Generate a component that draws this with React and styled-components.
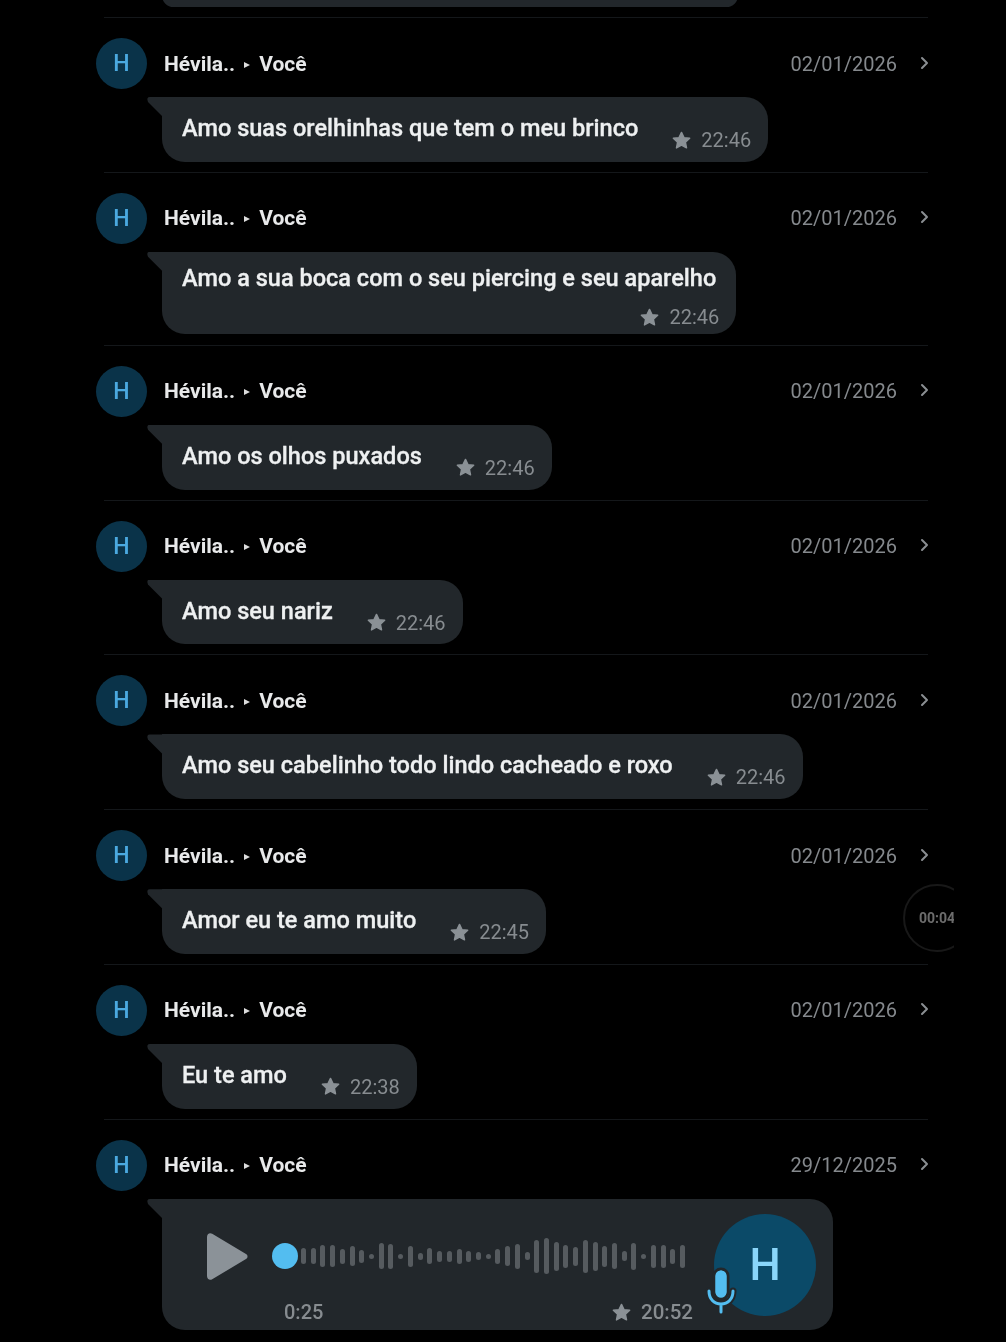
import React from 'react'
import styled, { createGlobalStyle } from 'styled-components'

const GlobalStyle = createGlobalStyle`
  html, body {
    margin: 0;
    height: 1342px;
    overflow: hidden;
    background: #000;
    font-family: Roboto, "Noto Sans", sans-serif;
  }
`

// the reference is a soft, upscaled video frame
const Page = styled.div`
  position: relative;
  width: 1006px;
  height: 1342px;
  padding-left: 96px;
  box-sizing: border-box;
  background: #000;
  overflow: hidden;
  filter: blur(0.45px);
`

const Divider = styled.div`
  width: 824px;
  height: 1px;
  margin-left: 8px;
  background: #14171a;
`

const Row = styled.div`
  width: 834px;
  padding: 20px 0 10px;
`

const Header = styled.div`
  display: flex;
  align-items: center;
  height: 51px;
  margin-bottom: 8px;
`

const Avatar = styled.div`
  display: flex;
  align-items: center;
  justify-content: center;
  width: 51px;
  height: 51px;
  flex-shrink: 0;
  margin-right: 17px;
  border-radius: 50%;
  background: #0a3349;
  color: #4ba9df;
  font-size: 23px;
  font-weight: 500;
`

const Name = styled.span`
  color: #e8e9ea;
  font-size: 21px;
  font-weight: 700;
`

const Caret = styled.span`
  width: 0;
  height: 0;
  margin: 2px 9px 0 9px;
  border-left: 6px solid #dcdcdc;
  border-top: 3px solid transparent;
  border-bottom: 3px solid transparent;
`

const DateText = styled.span`
  margin-left: auto;
  color: #85898d;
  font-size: 20px;
`

const Chevron = styled.svg`
  width: 10px;
  height: 14px;
  margin: -2px 0 0 23px;
  fill: none;
  stroke: #8a8e92;
  stroke-width: 2;
  stroke-linecap: round;
  stroke-linejoin: round;
`

const Bubble = styled.div`
  position: relative;
  display: flex;
  flex-direction: ${p => (p.$wrapped ? 'column' : 'row')};
  box-sizing: border-box;
  width: fit-content;
  height: ${p => (p.$wrapped ? '82.5px' : '64.8px')};
  margin: 0 0 ${p => (p.$wrapped ? '0.5px' : '0')} 66px;
  padding: ${p => (p.$wrapped ? '12.5px 20px 0' : '17px 17px 0 20px')};
  border-radius: 0 23px 23px 23px;
  background: #22272b;

  &::before {
    content: '';
    position: absolute;
    left: -15px;
    top: 0;
    width: 16px;
    height: 20px;
    background: #22272b;
    clip-path: path('M3 0 H16 V20 L1 5 Q-1 0 3 0 Z');
  }
`

const Peek = styled.div`
  width: 576px;
  height: 23px;
  margin: -16px 0 10px 66px;
  border-radius: 23px;
  background: #22272b;
`

const MessageText = styled.span`
  color: #eef0f1;
  font-size: 23.55px;
  font-weight: 500;
  line-height: 28px;
  white-space: nowrap;
  -webkit-text-stroke: 0.3px #eef0f1;
`

const Meta = styled.div`
  display: flex;
  align-items: center;
  gap: 10px;
  height: 26px;
  color: #878c90;
  font-size: ${p => (p.$strong ? '20.5px' : '20px')};
  font-weight: ${p => (p.$strong ? 500 : 400)};
`

const BubbleMeta = styled(Meta)`
  margin: ${p => (p.$wrapped ? '12px -3px 0 auto' : '13px 0 0 34px')};
`

const Star = styled.svg`
  width: 19px;
  height: 19px;
  fill: #8b9196;
  stroke: #8b9196;
  stroke-width: 1.5;
  stroke-linejoin: round;
`

const AudioBubble = styled.div`
  position: relative;
  display: grid;
  grid-template-columns: 41px 445px 123px;
  grid-template-rows: 84px 28px;
  box-sizing: border-box;
  width: 671px;
  height: 131px;
  margin: 8.3px 0 0 66px;
  padding: 15px 17px 4px 45px;
  border-radius: 0 23px 23px 23px;
  background: #22272b;

  &::before {
    content: '';
    position: absolute;
    left: -15px;
    top: 0;
    width: 16px;
    height: 20px;
    background: #22272b;
    clip-path: path('M3 0 H16 V20 L1 5 Q-1 0 3 0 Z');
  }
`

const PlayIcon = styled.svg`
  align-self: center;
  width: 41px;
  height: 47px;
  fill: #8b9298;
`

const Track = styled.div`
  display: flex;
  align-items: center;
  margin-left: 24px;
`

const Dot = styled.div`
  flex-shrink: 0;
  width: 26px;
  height: 26px;
  margin-right: 3px;
  border-radius: 50%;
  background: #53bdf0;
`

const Bars = styled.div`
  display: flex;
  align-items: center;
  gap: 4.72px;
`

const Bar = styled.div`
  width: 5px;
  height: ${p => p.$h}px;
  border-radius: 3px;
  background: #565b5f;
`

const TrackFooter = styled.div`
  display: flex;
  align-items: center;
  justify-content: space-between;
  grid-column: 2;
  grid-row: 2;
  margin-left: 24px;
  padding-left: 12px;
  color: #878c90;
  font-size: 20px;
  font-weight: 500;
`

const BigAvatar = styled.div`
  position: relative;
  display: flex;
  align-items: center;
  justify-content: center;
  grid-column: 3;
  grid-row: 1 / span 2;
  width: 102px;
  height: 102px;
  margin-left: 21px;
  border-radius: 50%;
  background: #0b4a68;
  color: #8ad6fa;
  font-size: 44px;
  font-weight: 500;
`

const MicBadge = styled.svg`
  position: absolute;
  left: -12px;
  top: 52px;
  width: 38px;
  height: 48px;
`

const TimerClip = styled.div`
  position: absolute;
  left: 900px;
  top: 880px;
  display: flex;
  align-items: center;
  justify-content: center;
  width: 54px;
  height: 75px;
  overflow: hidden;
`

const TimerRing = styled.svg`
  position: absolute;
  left: 3px;
  top: 4px;
  width: 68px;
  height: 68px;
  fill: none;
  stroke: #181818;
  stroke-width: 2;
`

const TimerText = styled.span`
  position: absolute;
  left: 19px;
  color: #6c6c6c;
  font-size: 14px;
  font-weight: 700;
  white-space: nowrap;
`

const messages = [
  { text: 'Amo suas orelhinhas que tem o meu brinco', time: '22:46' },
  { text: 'Amo a sua boca com o seu piercing e seu aparelho', time: '22:46', wrapped: true },
  { text: 'Amo os olhos puxados', time: '22:46' },
  { text: 'Amo seu nariz', time: '22:46' },
  { text: 'Amo seu cabelinho todo lindo cacheado e roxo', time: '22:46' },
  { text: 'Amor eu te amo muito', time: '22:45' },
  { text: 'Eu te amo', time: '22:38' },
]

const bars = [
  16, 16, 22, 22, 15, 20, 13, 5, 26, 25, 5, 21, 7, 16, 11, 11, 15, 11, 8, 5,
  15, 20, 25, 8, 33, 36, 29, 23, 19, 33, 29, 21, 26, 10, 27, 5, 23, 23, 15, 23,
]

const StarIcon = () => (
  <Star viewBox="2 2 20 20">
    <path d="M12 3.500l2.600 5.500 6 .7-4.500 4.100 1.200 6L12 16.800l-5.300 3 1.200-6-4.500-4.100 6-.7z" />
  </Star>
)

const ThreadHeader = ({ date }) => (
  <Header>
    <Avatar>H</Avatar>
    <Name>Hévila..</Name>
    <Caret />
    <Name>Você</Name>
    <DateText>{date}</DateText>
    <Chevron viewBox="0 0 10 14">
      <path d="M2 2l5 5-5 5" />
    </Chevron>
  </Header>
)

const App = () => (
  <>
    <GlobalStyle />
    <Page>
      <Peek />
      {messages.map((m, i) => (
        <React.Fragment key={i}>
          <Divider />
          <Row>
            <ThreadHeader date="02/01/2026" />
            <Bubble $wrapped={m.wrapped}>
              <MessageText>{m.text}</MessageText>
              <BubbleMeta $wrapped={m.wrapped}>
                <StarIcon />
                {m.time}
              </BubbleMeta>
            </Bubble>
          </Row>
        </React.Fragment>
      ))}
      <Divider />
      <Row>
        <ThreadHeader date="29/12/2025" />
        <AudioBubble>
          <PlayIcon viewBox="0 0 41 47">
            <path d="M0 4C0 .8 2.600-.8 5.200.7L39 21c2 1.200 2 3.800 0 5L5.200 46.300C2.600 47.800 0 46.200 0 43z" />
          </PlayIcon>
          <Track>
            <Dot />
            <Bars>
              {bars.map((h, i) => (
                <Bar key={i} $h={h} />
              ))}
            </Bars>
          </Track>
          <TrackFooter>
            <span>0:25</span>
            <Meta $strong>
              <StarIcon />
              20:52
            </Meta>
          </TrackFooter>
          <BigAvatar>
            H
            <MicBadge viewBox="0 0 38 48">
              <path d="M19 3a7 7 0 0 1 7 7v16a7 7 0 0 1-14 0V10a7 7 0 0 1 7-7z" fill="#53bdf0" stroke="#22272b" strokeWidth="3" />
              <path d="M7 25c0 8 5 13 12 13s12-5 12-13" fill="none" stroke="#22272b" strokeWidth="7" strokeLinecap="round" />
              <path d="M7 25c0 8 5 13 12 13s12-5 12-13M19 38v8" fill="none" stroke="#53bdf0" strokeWidth="3" strokeLinecap="round" />
              <path d="M19 4.500a5.500 5.500 0 0 1 5.500 5.500v16a5.500 5.500 0 0 1-11 0V10a5.500 5.500 0 0 1 5.500-5.500z" fill="#53bdf0" />
            </MicBadge>
          </BigAvatar>
        </AudioBubble>
      </Row>
      <TimerClip>
        <TimerRing viewBox="0 0 68 68">
          <circle cx="34" cy="34" r="33" />
        </TimerRing>
        <TimerText>00:04</TimerText>
      </TimerClip>
    </Page>
  </>
)

export default App
